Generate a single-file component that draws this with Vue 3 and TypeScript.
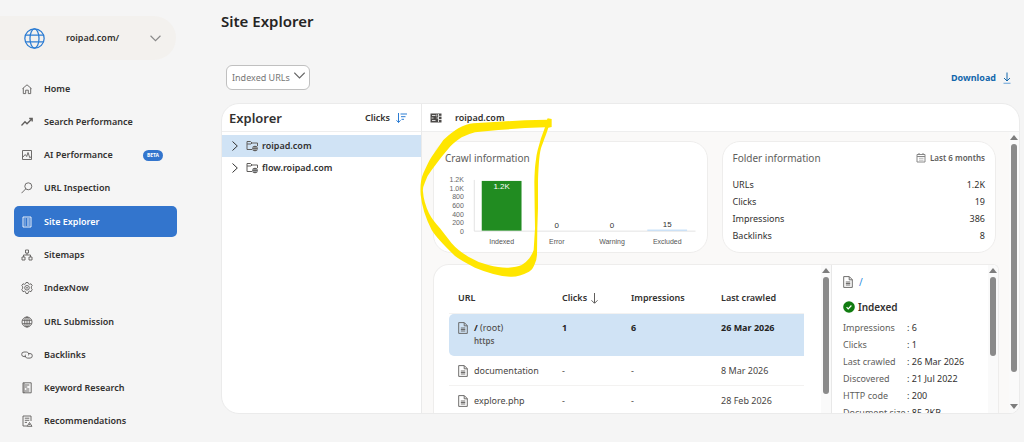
<script setup lang="ts">
import { ref } from 'vue'

interface NavItem { id: string; label: string; badge?: string }
interface PageRow { name: string; note?: string; scheme?: string; clicks: string; impressions: string; crawled: string }
interface Pair { label: string; value: string }

const nav: NavItem[] = [
  { id: 'home', label: 'Home' },
  { id: 'trend', label: 'Search Performance' },
  { id: 'ai', label: 'AI Performance', badge: 'BETA' },
  { id: 'search', label: 'URL Inspection' },
  { id: 'explorer', label: 'Site Explorer' },
  { id: 'sitemap', label: 'Sitemaps' },
  { id: 'gear', label: 'IndexNow' },
  { id: 'globe', label: 'URL Submission' },
  { id: 'link', label: 'Backlinks' },
  { id: 'keyword', label: 'Keyword Research' },
  { id: 'recommend', label: 'Recommendations' },
]
const active = ref('explorer')

const hosts = ['roipad.com', 'flow.roipad.com']
const selectedHost = ref(hosts[0])

const ticks = ['1.2K', '1.0K', '800', '600', '400', '200', '0']
const bars = [
  { label: 'Indexed', value: '1.2K', height: 50, fill: '#218c21', inside: true },
  { label: 'Error', value: '0', height: 0, fill: '#d13438', inside: false },
  { label: 'Warning', value: '0', height: 0, fill: '#ffb900', inside: false },
  { label: 'Excluded', value: '15', height: 1, fill: '#b5d6f6', inside: false },
]

const folder: Pair[] = [
  { label: 'URLs', value: '1.2K' },
  { label: 'Clicks', value: '19' },
  { label: 'Impressions', value: '386' },
  { label: 'Backlinks', value: '8' },
]

const rows: PageRow[] = [
  { name: '/', note: '(root)', scheme: 'https', clicks: '1', impressions: '6', crawled: '26 Mar 2026' },
  { name: 'documentation', clicks: '-', impressions: '-', crawled: '8 Mar 2026' },
  { name: 'explore.php', clicks: '-', impressions: '-', crawled: '28 Feb 2026' },
]

const details: Pair[] = [
  { label: 'Impressions', value: '6' },
  { label: 'Clicks', value: '1' },
  { label: 'Last crawled', value: '26 Mar 2026' },
  { label: 'Discovered', value: '21 Jul 2022' },
  { label: 'HTTP code', value: '200' },
  { label: 'Document size', value: '85.2KB' },
]
</script>

<template>
  <div class="app">
    <aside class="sidebar">
      <button class="site" type="button">
        <svg class="site-globe" viewBox="0 0 20 20"><circle cx="10" cy="10" r="9.2" /><ellipse cx="10" cy="10" rx="4.3" ry="9.2" /><path d="M1.500 6.800h17M1.500 13.200h17" /></svg>
        <span class="site-name">roipad.com/</span>
        <svg class="site-chevron" viewBox="0 0 10 6"><path d="M.5 .5 5 5 9.500 .5" /></svg>
      </button>
      <nav class="nav">
        <a v-for="item in nav" :key="item.id" href="#" class="nav-item" :class="{ active: item.id === active }" @click.prevent="active = item.id">
          <svg class="nav-icon" viewBox="0 0 12 12">
            <path v-if="item.id === 'home'" d="M1.500 5.700 6 1.800l4.500 3.900M2.300 5.100v5.500h2.400V7.200h2.600v3.400h2.400V5.100" />
            <path v-else-if="item.id === 'trend'" class="bold" d="M.5 9.500 4 5.800l2 2 5-5M8.200 2.500h3v3" />
            <path v-else-if="item.id === 'ai'" d="M1.500 1.500h9v9h-9zM1.500 8.500l2.700-3 1.500 2 1.300-4 1.800 5.300 1.700-1.400" />
            <template v-else-if="item.id === 'search'"><circle cx="7.300" cy="4.300" r="3.500" /><path d="M4.800 6.800.5 11.200" /></template>
            <path v-else-if="item.id === 'explorer'" d="M2 1h8v10H2zM3.500 3h1.200M6 3h2.700M3.500 5h1.200M6 5h2.700M3.500 7h1.200M6 7h2.700M3.500 9h1.200M6 9h2.700" />
            <path v-else-if="item.id === 'sitemap'" d="M4.500 1h3v3h-3zM1 8h3v3H1zM8 8h3v3H8zM6 4v2M2.500 8V6h7v2" />
            <template v-else-if="item.id === 'gear'"><path d="m5 .5 2 0 .5 1.300 1 .5 1.500-.5 1.200 1.700-.9 1.300v1.400l.9 1.300L10 9.700 8.500 9.200l-1 .5L7 11.500H5l-.5-1.800-1-.5-1.500.5L.8 7.500l.9-1.300V4.800L.8 3.500 2 1.800l1.500.5 1-.5z" /><circle cx="6" cy="5.800" r="2.300" /><circle cx="6" cy="5.800" r=".5" /></template>
            <template v-else-if="item.id === 'globe'"><circle cx="6" cy="6" r="5" /><ellipse cx="6" cy="6" rx="2.300" ry="5" /><path d="M1.300 4.300h9.400M1.300 7.700h9.400M6 1v10" /></template>
            <path v-else-if="item.id === 'link'" d="M5 7.600H3A2.300 2.300 0 0 1 3 3h2.500a2.300 2.300 0 0 1 2 3.400M7 4.500h2a2.300 2.300 0 0 1 0 4.600H6.500a2.300 2.300 0 0 1-2-3.400" />
            <path v-else-if="item.id === 'keyword'" d="M2 .8h8.200v10H2zM3.800 3h4.500M3.800 5h2.500M5.300 7h3M3.800 9h4.500M3 1v10" />
            <path v-else d="M6 11H2V1h8v5M3.800 3.200h4.500M3.800 5.300h4.500M3.800 7.400H6M8.500 7.500 11 11.300H6.200zM8.600 9v1" />
          </svg>
          <span>{{ item.label }}</span>
          <span v-if="item.badge" class="badge">{{ item.badge }}</span>
        </a>
      </nav>
    </aside>

    <main class="main">
      <h1 class="title">Site Explorer</h1>
      <div class="toolbar">
        <div class="filter">
          <select aria-label="URL filter"><option>Indexed URLs</option></select>
          <svg viewBox="0 0 10 6"><path d="M.3 .5 5 5.200 9.700 .5" /></svg>
        </div>
        <button class="download" type="button">
          Download
          <svg viewBox="0 0 8 12"><path d="M4 .5v8.500M1 6l3 3 3-3" /><path class="tray" d="M.5 11.300h7" /></svg>
        </button>
      </div>

      <section class="panel">
        <div class="tree">
          <header class="tree-head">
            <h2>Explorer</h2>
            <button class="sort" type="button">
              Clicks
              <svg viewBox="0 0 11 10"><path d="M2.500 0v9.500M.5 7.300l2 2.200 2-2.200M4.500 1H11M5 3.700h4.500M5.500 6.300h2.500" /></svg>
            </button>
          </header>
          <ul class="hosts">
            <li v-for="host in hosts" :key="host">
              <button type="button" class="host" :class="{ selected: host === selectedHost }" @click="selectedHost = host">
                <svg class="host-chevron" viewBox="0 0 6 10"><path d="M.5 .5 5.300 5 .5 9.500" /></svg>
                <svg class="host-folder" viewBox="0 0 13 12"><path d="M6 9.500H1V1.500h3.500L6 3h5.500v3M1 4h4l1-1" /><circle cx="9" cy="8.500" r="2.800" /><path class="cut" d="M6.500 7.700h5M6.500 9.500h5" /></svg>
                <span>{{ host }}</span>
              </button>
            </li>
          </ul>
        </div>

        <div class="content">
          <header class="content-head">
            <svg viewBox="0 0 12 10"><path class="fill" d="M.5 .5h11v9H.5z" /><path class="grid" d="M2 2.500h3.500M1.500 5h2M2 7.500h3.500M6.800 1.500v2M8.500 1v8M6.500 5h2M9 3.300h3M9 6.500h3" /></svg>
            <h2>roipad.com</h2>
          </header>

          <div class="content-body">
            <div class="scrolled">
              <div class="cards">
                <article class="card">
                  <h3>Crawl information</h3>
                  <svg class="chart" viewBox="0 0 274 84" role="img" aria-label="Crawl information chart">
                    <text v-for="(t, i) in ticks" :key="t" class="tick" x="30" :y="14 + i * 8.7" text-anchor="end">{{ t }}</text>
                    <path class="axis" d="M40.500 12v51.500H263" />
                    <g v-for="(b, i) in bars" :key="b.label">
                      <rect :x="48 + i * 55.5" :y="63 - b.height" width="40" :height="b.height" :fill="b.fill" />
                      <text class="value" :class="{ inside: b.inside }" :x="68 + i * 55.5" :y="b.inside ? 21 : 60 - b.height" text-anchor="middle">{{ b.value }}</text>
                      <text class="category" :x="68 + i * 55.5" y="76" text-anchor="middle">{{ b.label }}</text>
                    </g>
                  </svg>
                </article>
                <article class="card folder">
                  <header>
                    <h3>Folder information</h3>
                    <span class="period">
                      <svg viewBox="0 0 10 10"><path d="M1 1.500h8v7.500H1zM1 3.500h8M3 0v2M7 0v2" /><path class="dots" d="M3 5.300h4.500M3 7.200h4.500" /></svg>
                      Last 6 months
                    </span>
                  </header>
                  <dl>
                    <div v-for="f in folder" :key="f.label"><dt>{{ f.label }}</dt><dd>{{ f.value }}</dd></div>
                  </dl>
                </article>
              </div>

              <div class="lower">
                <div class="list">
                  <table>
                    <colgroup><col class="c-url" /><col class="c-clicks" /><col class="c-impressions" /><col /></colgroup>
                    <thead>
                      <tr>
                        <th scope="col">URL</th>
                        <th scope="col">Clicks <svg class="down" viewBox="0 0 7 11"><path d="M3.500 0v10M.5 7.300l3 3 3-3" /></svg></th>
                        <th scope="col">Impressions</th>
                        <th scope="col">Last crawled</th>
                      </tr>
                    </thead>
                    <tbody>
                      <tr v-for="(r, i) in rows" :key="r.name" :class="{ picked: i === 0 }">
                        <td>
                          <div class="url">
                            <svg class="doc" viewBox="0 0 10 12"><path d="M.7.6h5.600L9.300 3.600v7.800H.7zM6.200.8v3h3M2.800 6h4.500M2.800 7.500h4.500M2.800 9h4.500" /></svg>
                            <span><b v-if="r.note">{{ r.name }}</b><template v-else>{{ r.name }}</template> {{ r.note }}<small v-if="r.scheme">{{ r.scheme }}</small></span>
                          </div>
                        </td>
                        <td>{{ r.clicks }}</td>
                        <td>{{ r.impressions }}</td>
                        <td>{{ r.crawled }}</td>
                      </tr>
                    </tbody>
                  </table>
                  <div class="bar bar-list"><i class="up"></i><i class="thumb"></i></div>
                </div>
                <div class="detail">
                  <div class="detail-text">
                    <a class="path" href="#">
                      <svg class="doc" viewBox="0 0 10 12"><path d="M.7.6h5.600L9.300 3.600v7.800H.7zM6.200.8v3h3M2.800 6h4.500M2.800 7.500h4.500M2.800 9h4.500" /></svg>
                      /
                    </a>
                    <p class="status">
                      <svg viewBox="0 0 12 12"><circle cx="6" cy="6" r="5.800" /><path d="m3.600 6.200 1.600 1.600 3.200-3.300" /></svg>
                      Indexed
                    </p>
                    <dl>
                      <div v-for="d in details" :key="d.label"><dt>{{ d.label }}</dt><dd>: {{ d.value }}</dd></div>
                    </dl>
                  </div>
                  <div class="bar bar-detail"><i class="up"></i><i class="thumb"></i></div>
                </div>
              </div>
            </div>
            <div class="bar bar-main"><i class="up"></i><i class="thumb"></i><i class="down-arrow"></i></div>
          </div>
          <svg class="marker" viewBox="0 0 420 552" aria-hidden="true">
            <path fill-rule="evenodd" d="M396 74 398 70 410 72V96L400 98C396 112 381 150 378 160 372 180 370 230 369 260V340L367 400 366 480Q365 497 358 510 352 525 342 530 310 547 285 545 240 543 180 518 135 495 120 483 65 430 50 405 22 350 17 300 14 260 25 235 40 200 50 185L85 135Q110 112 130 100 155 87 175 85L250 80 330 76ZM390 97 330 99 250 105 180 112Q160 117 140 127 125 136 105 155L80 185 50 225Q36 242 30 262 22 280 24 290 26 320 42 355 52 375 75 400L110 445Q130 468 160 485 190 503 220 510 255 519 280 518 305 517 320 510 336 500 343 490 353 475 356 465L360 400 359 340 358 260Q359 220 362 200 364 180 368 165L378 130Z" />
          </svg>
        </div>
      </section>
    </main>
  </div>
</template>

<style>
body { background: #f5f5f5; }
</style>

<style scoped>
* { box-sizing: border-box; }
.app { display: flex; height: 100vh; overflow: hidden; background: #f5f5f5; color: #323130; font: 9px/14px "Noto Sans", "Open Sans", sans-serif; }
h1, h2, h3, p, dl, dd, ul { margin: 0; padding: 0; }
h1, h2, h3 { font-weight: 600; }
button { border: 0; padding: 0; margin: 0; background: none; color: inherit; font: inherit; cursor: pointer; text-align: left; }
a { color: inherit; text-decoration: none; }
svg { display: block; flex: none; fill: none; stroke: currentColor; }

.sidebar { width: 221px; flex: none; display: flex; flex-direction: column; padding: 16px 44px 5px 0; }
.site { display: flex; align-items: center; height: 44px; width: 176px; padding-left: 24px; background: #f3f1ee; border-radius: 0 22px 22px 0; font-weight: 600; }
.site-globe { width: 21px; height: 21px; color: #2b7cd3; stroke-width: 1.2; }
.site-name { flex: 1; padding-left: 21px; }
.site-chevron { width: 11px; height: 7px; margin-right: 15px; color: #888; }
.nav { flex: 1; display: flex; flex-direction: column; justify-content: space-between; padding: 13px 0 0 14px; }
.nav-item { display: flex; align-items: center; height: 31px; padding-left: 7px; border-radius: 5px; font-weight: 600; }
.nav-icon { width: 12px; height: 12px; margin-right: 11px; color: #605e5c; stroke-width: .9; }
.nav-icon .bold { stroke-width: 1.3; }
.active { background: #3375cd; color: #fff; }
.active .nav-icon { color: #fff; }
.badge { margin-left: auto; margin-right: 14px; padding: 0 4px; height: 11px; border-radius: 6px; background: #3375cd; color: #fff; font-size: 5px; line-height: 11px; font-weight: 700; }

.main { flex: 1; min-width: 0; display: flex; flex-direction: column; padding: 10px 4px 28px 0; }
.title { font-size: 15px; line-height: 22px; color: #252423; }
.toolbar { display: flex; justify-content: space-between; align-items: center; padding: 33px 9px 13px 5px; }
.filter { position: relative; }
.filter select { appearance: none; width: 84px; height: 25px; padding: 0 0 0 5px; border: 1px solid #c0c0c0; border-radius: 6px; background: #fff; color: #767676; font: inherit; }
.filter svg { position: absolute; right: 5px; top: 7px; width: 11px; height: 7px; color: #666; pointer-events: none; }
.download { display: flex; align-items: center; gap: 7px; color: #1267ac; font-weight: 700; }
.download svg { width: 8px; height: 12px; }
.download .tray { stroke: #7fb0dd; stroke-width: 1.2; }

.panel { flex: 1; min-height: 0; display: flex; overflow: hidden; border: 1px solid #ebebeb; border-radius: 18px 18px 10px 18px; background: #fff; }
.tree { width: 200px; flex: none; border-right: 1px solid #eaeaea; }
.tree-head { display: flex; align-items: center; justify-content: space-between; height: 28px; padding: 0 14px 0 7px; border-bottom: 1px solid #eee; }
.tree-head h2 { font-size: 13px; line-height: 18px; color: #323130; }
.sort { display: flex; align-items: center; gap: 6px; font-weight: 600; }
.sort svg { width: 11px; height: 10px; color: #2b7cd3; }
.hosts { list-style: none; padding-top: 3px; }
.host { display: flex; align-items: center; width: 100%; height: 22px; padding-left: 10px; font-weight: 600; }
.host.selected { background: #d0e3f5; }
.host-chevron { width: 6px; height: 10px; margin-right: 8px; }
.host-folder { width: 13px; height: 12px; margin-right: 3px; color: #605e5c; }
.host-folder circle { fill: #605e5c; stroke: none; }
.host-folder .cut { stroke: #d9e3ec; stroke-width: .5; }

.content { position: relative; flex: 1; min-width: 0; display: flex; flex-direction: column; }
.content-head { display: flex; align-items: center; height: 28px; padding-left: 8px; border-bottom: 1px solid #eee; }
.content-head svg { width: 12px; height: 10px; margin-right: 13px; stroke: none; }
.content-head .fill { fill: #4c4a48; }
.content-head .grid { stroke: #fff; stroke-width: .8; }
.content-head h2 { font-size: 9px; }
.content-body { flex: 1; min-height: 0; display: flex; background: #faf9f8; }
.scrolled { flex: 1; min-width: 0; display: flex; flex-direction: column; padding: 9px 10px 0 11px; }
.cards { display: grid; grid-template-columns: 1fr 1fr; gap: 14px; padding-right: 3px; }
.card { height: 112px; border: 1px solid #eeedec; border-radius: 18px; background: #fff; overflow: hidden; }
.card h3 { font-size: 10px; line-height: 16px; font-weight: 400; color: #605e5c; }
.card > h3 { padding: 8px 0 2px 11px; }
.chart { width: 100%; height: auto; font-family: "Liberation Sans", Arial, sans-serif; stroke: none; }
.tick { font-size: 7px; fill: #666; }
.category { font-size: 7px; fill: #555; }
.value { font-size: 8px; fill: #333; }
.value.inside { fill: #fff; }
.axis { stroke: #e3e3e3; }
.folder { padding: 8px 10px 0; }
.folder header { display: flex; align-items: center; justify-content: space-between; }
.period { display: flex; align-items: center; gap: 4px; font-size: 8px; font-weight: 600; color: #605e5c; }
.period svg { width: 10px; height: 10px; color: #888; }
.period .dots { stroke: #bbb; }
.folder dl { padding-top: 10px; }
dl div { display: flex; line-height: 17px; }
.folder dl div { justify-content: space-between; }

.lower { flex: 1; min-height: 0; display: flex; margin-top: 11px; background: #fff; border: 1px solid #eeedec; border-bottom: 0; border-radius: 16px 6px 0 0; overflow: hidden; }
.list { flex: 1; min-width: 0; display: flex; justify-content: space-between; padding-left: 15px; border-right: 1px solid #e8e8e8; overflow: hidden; }
table { width: 355px; margin-top: 17px; table-layout: fixed; border-collapse: separate; border-spacing: 0; align-self: flex-start; }
.c-url { width: 104px; }
.c-clicks { width: 69px; }
.c-impressions { width: 90px; }
th { height: 32px; padding: 0 0 0 9px; text-align: left; font-weight: 600; border-bottom: 1px solid #f3f2f1; }
.down { display: inline-block; width: 7px; height: 11px; margin-left: 2px; vertical-align: -3px; color: #605e5c; }
td { height: 30px; padding: 0 0 0 9px; color: #484644; border-bottom: 1px solid #f3f2f1; }
.picked td { height: 42px; padding-top: 7px; vertical-align: top; background: #d0e3f5; border-bottom: 0; font-weight: 700; color: #252423; }
.picked td:first-child { border-radius: 5px 0 0 5px; }
.url { display: flex; font-weight: 400; color: #484644; white-space: nowrap; }
.url b { color: #252423; }
.url small { display: block; font-size: 8px; line-height: 12px; font-weight: 600; color: #605e5c; }
.doc { width: 10px; height: 12px; margin: 1px 6px 0 0; color: #605e5c; stroke-width: .9; }

.detail { width: 166px; flex: none; display: flex; justify-content: space-between; overflow: hidden; }
.detail-text { padding: 10px 0 0 11px; white-space: nowrap; }
.path { display: flex; color: #2b8be0; font-size: 10px; }
.status { display: flex; align-items: center; gap: 3px; padding: 10px 0 4px; font-size: 10px; line-height: 16px; font-weight: 600; }
.status svg { width: 12px; height: 12px; fill: #107c10; stroke: none; }
.status path { fill: none; stroke: #fff; stroke-width: 1.2; }
.detail dt { width: 64px; color: #605e5c; }

.bar { flex: none; display: flex; flex-direction: column; align-items: center; width: 10px; background: #fafafa; }
.bar i { flex: none; }
.up { margin-top: 3px; border: 4px solid transparent; border-top: 0; border-bottom: 5px solid #7d7d7d; }
.thumb { width: 6px; margin-top: 4px; border-radius: 3px; background: #8a8a8a; }
.bar-list .thumb { height: 117px; }
.bar-detail .thumb { height: 79px; }
.bar-main .thumb { height: 228px; }
.down-arrow { margin-top: auto; margin-bottom: 4px; border: 4px solid transparent; border-bottom: 0; border-top: 5px solid #7d7d7d; }

.marker { position: absolute; left: -7px; top: -9px; width: 140px; height: 184px; fill: #ffe600; stroke: none; pointer-events: none; }
</style>
